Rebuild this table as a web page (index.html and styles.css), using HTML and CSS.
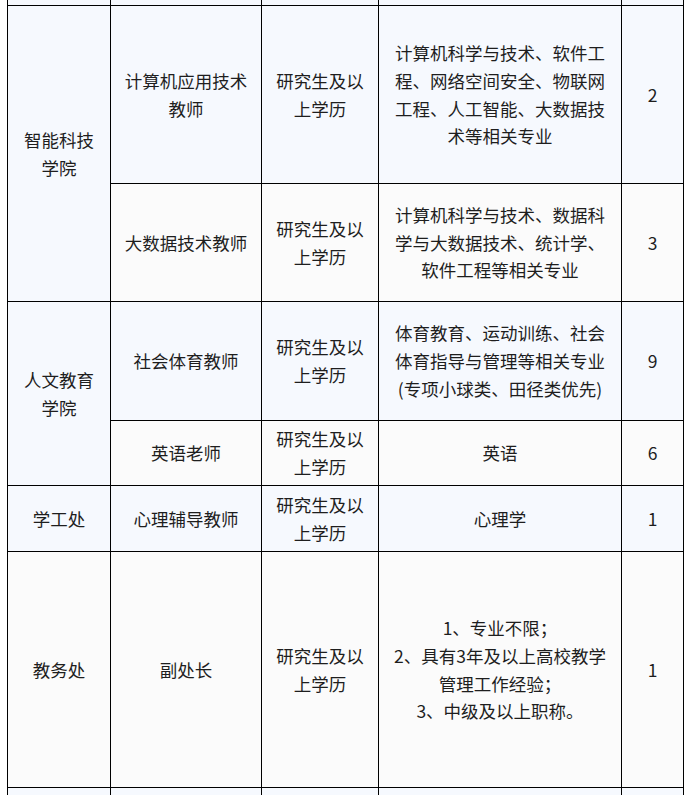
FILE: index.html
```html
<!DOCTYPE html>
<html lang="zh-CN">
<head>
<meta charset="utf-8">
<title>招聘岗位</title>
<link rel="stylesheet" href="styles.css">
</head>
<body>
<div class="page">
<table class="jobs">
  <colgroup>
    <col class="c1"><col class="c2"><col class="c3"><col class="c4"><col class="c5">
  </colgroup>
  <tr class="row-top">
    <td class="blue"></td><td class="blue"></td><td class="blue"></td><td class="blue"></td><td class="blue"></td>
  </tr>
  <tr class="row-a">
    <td class="blue" rowspan="2">智能科技学院</td>
    <td class="blue">计算机应用技术教师</td>
    <td class="blue">研究生及以上学历</td>
    <td class="blue">计算机科学与技术、软件工程、网络空间安全、物联网工程、人工智能、大数据技术等相关专业</td>
    <td class="blue">2</td>
  </tr>
  <tr class="row-b">
    <td class="grey">大数据技术教师</td>
    <td class="grey">研究生及以上学历</td>
    <td class="grey">计算机科学与技术、数据科学与大数据技术、统计学、软件工程等相关专业</td>
    <td class="grey">3</td>
  </tr>
  <tr class="row-c">
    <td class="blue" rowspan="2">人文教育学院</td>
    <td class="blue">社会体育教师</td>
    <td class="blue">研究生及以上学历</td>
    <td class="blue">体育教育、运动训练、社会体育指导与管理等相关专业(专项小球类、田径类优先)</td>
    <td class="blue">9</td>
  </tr>
  <tr class="row-d">
    <td class="grey">英语老师</td>
    <td class="grey">研究生及以上学历</td>
    <td class="grey">英语</td>
    <td class="grey">6</td>
  </tr>
  <tr class="row-e">
    <td class="blue">学工处</td>
    <td class="blue">心理辅导教师</td>
    <td class="blue">研究生及以上学历</td>
    <td class="blue">心理学</td>
    <td class="blue">1</td>
  </tr>
  <tr class="row-f">
    <td class="grey">教务处</td>
    <td class="grey">副处长</td>
    <td class="grey">研究生及以上学历</td>
    <td class="grey">1、专业不限；<br>2、具有3年及以上高校教学管理工作经验；<br>3、中级及以上职称。</td>
    <td class="grey">1</td>
  </tr>
  <tr class="row-g">
    <td class="blue"></td><td class="blue"></td><td class="blue"></td><td class="blue"></td><td class="blue"></td>
  </tr>
</table>
</div>
</body>
</html>
```

FILE: styles.css
```css
html, body {
  margin: 0;
  padding: 0;
  background: #ffffff;
}
body {
  overflow: hidden;
  height: 795px;
}
.page {
  padding-left: 7px;
}
.jobs {
  border-collapse: collapse;
  table-layout: fixed;
  width: 676px;
  font-family: "Noto Sans CJK SC", "Microsoft YaHei", sans-serif;
  font-size: 17.5px;
  line-height: 27.7px;
  color: #1e1e1e;
}
.c1 { width: 103px; }
.c2 { width: 151px; }
.c3 { width: 117px; }
.c4 { width: 243px; }
.c5 { width: 62px; }
.jobs td {
  border: 1px solid #000;
  padding: 4px 10px;
  text-align: center;
  vertical-align: middle;
  word-break: break-all;
}
.jobs td.blue { background: #f6f9fe; }
.jobs td.grey { background: #fbfbfb; }
.row-top td {
  border-top: none;
  height: 5px;
  padding: 0;
}
.row-a td { height: 169px; }
.row-b td { height: 109px; }
.row-c td { height: 110px; }
.row-d td { height: 56px; }
.row-e td { height: 57px; }
.row-f td { height: 227px; }
.row-g td { height: 30px; }
```
